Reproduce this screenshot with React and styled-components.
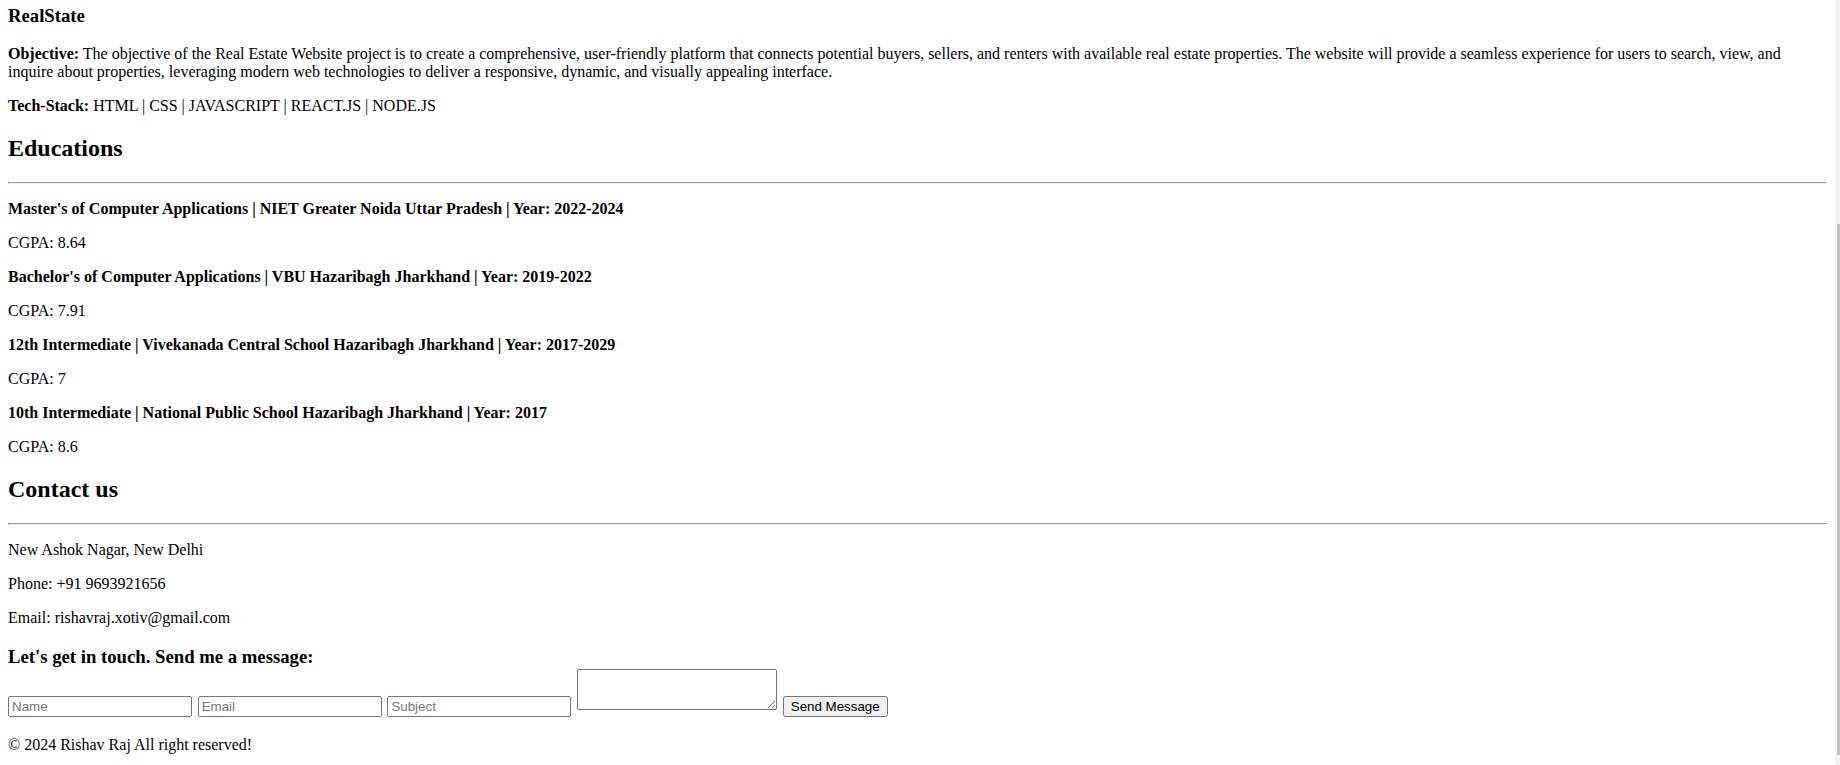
import React, { useLayoutEffect, useRef, useState } from "react";
import styled, { createGlobalStyle } from "styled-components";

const GlobalStyle = createGlobalStyle`
  html, body {
    background: #ffffff;
    height: 100%;
  }
  body {
    margin: 0;
    overflow: hidden;
    font-family: "Liberation Serif", "Times New Roman", serif;
    font-size: 16px;
    color: #000000;
  }
`;

const Viewport = styled.div`
  display: flex;
  height: 100vh;
  overflow: hidden;
`;

const ScrollArea = styled.div`
  flex: 1 1 auto;
  min-width: 0;
  height: 100%;
  overflow: hidden;
`;

const ScrollTrack = styled.div`
  flex: 0 0 5px;
  position: relative;
  background: #f1f1f1;
`;

const ScrollThumb = styled.div`
  position: absolute;
  right: 0;
  width: 3px;
  background: #c1c1c1;
`;

const Page = styled.main`
  display: block;
  margin: 8px 8px 25px;
`;

/* Earlier part of the resume, scrolled out of view above the visible area */
const EarlierContent = styled.div`
  height: 300px;
`;

const ProjectTitle = styled.h3`
  font-size: 1.17em;
  font-weight: bold;
  margin: 1em 0;
`;

const Text = styled.p`
  margin: 1em 0;
  line-height: normal;
  font-weight: ${(p) => (p.$bold ? "bold" : "normal")};
`;

const Label = styled.strong`
  font-weight: bold;
`;

const SectionTitle = styled.h2`
  font-size: 1.5em;
  font-weight: bold;
  margin: 0.83em 0;
`;

const Rule = styled.hr`
  margin: 0.5em auto;
  border-style: inset;
  border-width: 1px;
  color: gray;
`;

const ContactBlock = styled.h3`
  font-size: 1.17em;
  font-weight: bold;
  margin: 1em 0;
`;

const Form = styled.form`
  display: block;
  margin: 0;
`;

const Field = styled.input`
  font-family: "Liberation Sans", Arial, sans-serif;
  font-size: 13.333px;
  font-weight: normal;
  width: 184px;
  box-sizing: border-box;
  margin: 0 1px 0 0;
`;

const MessageBox = styled.textarea`
  font-family: "Liberation Mono", monospace;
  font-size: 13.333px;
  font-weight: normal;
  width: 200px;
  height: 41px;
  box-sizing: border-box;
  margin: 1px 1px 1px 0;
`;

const SendButton = styled.button`
  font-family: "Liberation Sans", Arial, sans-serif;
  font-size: 13.333px;
  font-weight: normal;
  margin: 0;
`;

const Footer = styled.footer`
  display: block;
`;

const education = [
  {
    title:
      "Master's of Computer Applications | NIET Greater Noida Uttar Pradesh | Year: 2022-2024",
    cgpa: "8.64",
  },
  {
    title:
      "Bachelor's of Computer Applications | VBU Hazaribagh Jharkhand | Year: 2019-2022",
    cgpa: "7.91",
  },
  {
    title:
      "12th Intermediate | Vivekanada Central School Hazaribagh Jharkhand | Year: 2017-2029",
    cgpa: "7",
  },
  {
    title:
      "10th Intermediate | National Public School Hazaribagh Jharkhand | Year: 2017",
    cgpa: "8.6",
  },
];

export default function App() {
  const areaRef = useRef(null);
  const titleRef = useRef(null);
  const [thumb, setThumb] = useState({ top: 0, height: 0 });

  useLayoutEffect(() => {
    const area = areaRef.current;
    const title = titleRef.current;
    if (!area || !title) return;
    const offset =
      title.getBoundingClientRect().top -
      area.getBoundingClientRect().top +
      area.scrollTop;
    area.scrollTop = Math.round(offset - 4.7);
    const h = area.clientHeight;
    const total = area.scrollHeight;
    setThumb({
      top: (area.scrollTop / total) * h,
      height: (h / total) * h,
    });
  }, []);

  return (
    <>
      <GlobalStyle />
      <Viewport>
        <ScrollArea ref={areaRef}>
          <Page>
            <EarlierContent />
            <ProjectTitle ref={titleRef}>RealState</ProjectTitle>
            <Text>
              <Label>Objective:</Label> The objective of the Real Estate
              Website project is to create a comprehensive, user-friendly
              platform that connects potential buyers, sellers, and renters with
              available real estate properties. The website will provide a
              seamless experience for users to search, view, and inquire about
              properties, leveraging modern web technologies to deliver a
              responsive, dynamic, and visually appealing interface.
            </Text>
            <Text>
              <Label>Tech-Stack:</Label> HTML | CSS | JAVASCRIPT | REACT.JS |
              NODE.JS
            </Text>

            <SectionTitle>Educations</SectionTitle>
            <Rule />
            {education.map((e) => (
              <React.Fragment key={e.title}>
                <Text $bold>{e.title}</Text>
                <Text>CGPA: {e.cgpa}</Text>
              </React.Fragment>
            ))}

            <SectionTitle>Contact us</SectionTitle>
            <Rule />
            <Text>New Ashok Nagar, New Delhi</Text>
            <Text>Phone: +91 9693921656</Text>
            <Text>Email: rishavraj.xotiv@gmail.com</Text>

            <ContactBlock>
              Let's get in touch. Send me a message:
              <Form onSubmit={(ev) => ev.preventDefault()}>
                <Field type="text" placeholder="Name" />{" "}
                <Field type="email" placeholder="Email" />{" "}
                <Field type="text" placeholder="Subject" />{" "}
                <MessageBox />{" "}
                <SendButton type="submit">Send Message</SendButton>
              </Form>
            </ContactBlock>

            <Footer>
              <Text>© 2024 Rishav Raj All right reserved!</Text>
            </Footer>
          </Page>
        </ScrollArea>
        <ScrollTrack>
          <ScrollThumb style={{ top: thumb.top, height: thumb.height }} />
        </ScrollTrack>
      </Viewport>
    </>
  );
}
